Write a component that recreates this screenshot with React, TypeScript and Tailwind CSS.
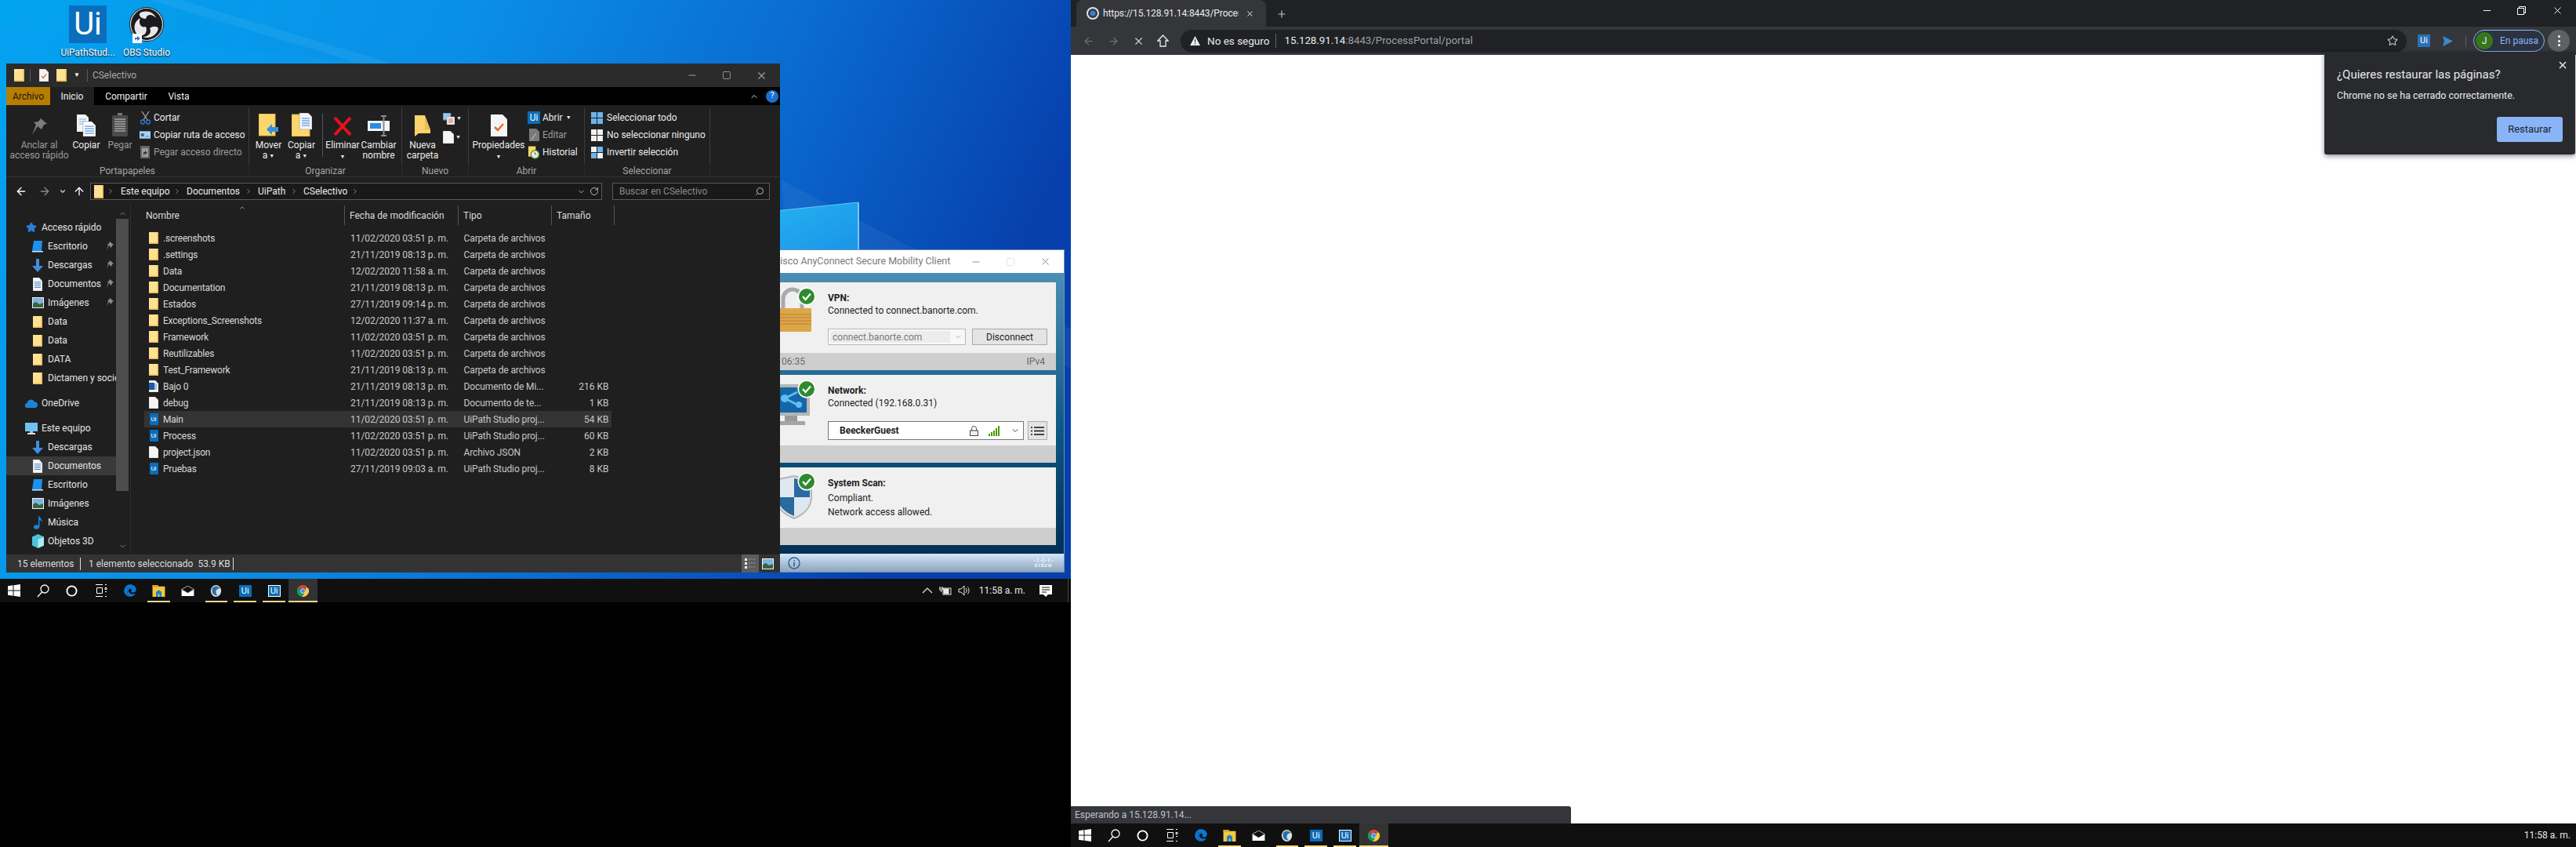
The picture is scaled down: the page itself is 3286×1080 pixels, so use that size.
import React from "react";
import { FaEdge } from "react-icons/fa";
import { ArrowLeft, ArrowRight, ArrowUp, ChevronDown, ChevronRight, ChevronUp, Minus, Plus, RotateCw, Search, Square, Star, X } from "lucide-react";

const folders = [
    [".screenshots", "11/02/2020 03:51 p. m."],
    [".settings", "21/11/2019 08:13 p. m."],
    ["Data", "12/02/2020 11:58 a. m."],
    ["Documentation", "21/11/2019 08:13 p. m."],
    ["Estados", "27/11/2019 09:14 p. m."],
    ["Exceptions_Screenshots", "12/02/2020 11:37 a. m."],
    ["Framework", "11/02/2020 03:51 p. m."],
    ["Reutilizables", "11/02/2020 03:51 p. m."],
    ["Test_Framework", "21/11/2019 08:13 p. m."],
];

const files = [
    { name: "Bajo 0", date: "21/11/2019 08:13 p. m.", type: "Documento de Mi...", size: "216 KB", icon: "word" },
    { name: "debug", date: "21/11/2019 08:13 p. m.", type: "Documento de te...", size: "1 KB", icon: "text" },
    { name: "Main", date: "11/02/2020 03:51 p. m.", type: "UiPath Studio proj...", size: "54 KB", icon: "ui", selected: true },
    { name: "Process", date: "11/02/2020 03:51 p. m.", type: "UiPath Studio proj...", size: "60 KB", icon: "ui" },
    { name: "project.json", date: "11/02/2020 03:51 p. m.", type: "Archivo JSON", size: "2 KB", icon: "blank" },
    { name: "Pruebas", date: "27/11/2019 09:03 a. m.", type: "UiPath Studio proj...", size: "8 KB", icon: "ui" },
];

function FolderIcon({ w = 12, h = 15 }: { w?: number; h?: number }) {
    return (
        <svg width={w} height={h} viewBox="0 0 12 15" preserveAspectRatio="none" className="shrink-0">
            <rect x="0" y="0" width="12" height="15" fill="#e9bd55" />
            <rect x="0" y="0" width="10.500" height="13.500" fill="#fde293" />
        </svg>
    );
}

function PageIcon({ w = 12, h = 15, lines = false, check = false }: { w?: number; h?: number; lines?: boolean; check?: boolean }) {
    return (
        <svg width={w} height={h} viewBox="0 0 12 15" preserveAspectRatio="none" className="shrink-0">
            <path d="M0 0h8l4 4v11H0z" fill="#f5f5f5" stroke="#999" strokeWidth="0.4" />
            {lines && <path d="M2 5h8M2 7h8M2 9h8M2 11h8" stroke="#4a86d0" strokeWidth="0.9" />}
            {check && <path d="M3 8.5l2.2 2.2L9 6" fill="none" stroke="#e8632b" strokeWidth="1.3" />}
        </svg>
    );
}

function UiLogo({ size = 12, height, border = false, radius = 0 }: { size?: number; height?: number; border?: boolean; radius?: number }) {
    const h = height ?? size;
    return (
        <div
            className={`flex shrink-0 items-center justify-center bg-[#0b6cb8] font-['Roboto'] leading-none text-white ${border ? "border border-white" : ""}`}
            style={{ width: size, height: h, fontSize: Math.round(Math.min(size, h) * 0.72), borderRadius: radius }}
        >
            Ui
        </div>
    );
}

function Pin() {
    return (
        <svg width="10" height="12" viewBox="0 0 10 12">
            <path d="M5 0l5 4-2 1-1 3-3-3-3 6 2-6.500L2 3l2-.5z" fill="#8a8a8a" />
        </svg>
    );
}

function DesktopIcon({ w = 14, h = 16 }: { w?: number; h?: number }) {
    return (
        <svg width={w} height={h} viewBox="0 0 14 16">
            <path d="M2 1h11l-1 13H0z" fill="#1e90ef" />
            <rect x="0" y="14" width="14" height="1.500" fill="#cfe8fb" />
        </svg>
    );
}

function DownloadIcon() {
    return (
        <svg width="14" height="17" viewBox="0 0 14 17">
            <path d="M5 0h4v9h5l-7 8-7-8h5z" fill="#3f8fdf" />
        </svg>
    );
}

function PictureIcon() {
    return (
        <svg width="15" height="14" viewBox="0 0 15 14">
            <rect width="15" height="14" fill="#f2f2f2" />
            <rect x="1" y="1" width="13" height="12" fill="#7db5dd" />
            <path d="M1 8l4-2 4 3 5-2v6H1z" fill="#38633f" />
        </svg>
    );
}

function NavItem({ label, icon, pinned, active, top }: { label: string; icon: React.ReactNode; pinned?: boolean; active?: boolean; top?: boolean }) {
    return (
        <div className={`flex h-[24px] w-[140px] items-center overflow-hidden ${active ? "bg-[#3a3a3a]" : ""}`}>
            <div className={`flex w-[16px] shrink-0 justify-center ${top ? "ml-[24px] mr-[5px]" : "ml-[32px] mr-[5px]"}`}>{icon}</div>
            <span className="whitespace-nowrap text-[#e4e4e4]">{label}</span>
            {pinned && (
                <span className="ml-auto mr-[3px] shrink-0">
                    <Pin />
                </span>
            )}
        </div>
    );
}

function BigButton({ width, icon, lines, disabled, caret, className = "" }: { width: number; icon: React.ReactNode; lines: string[]; disabled?: boolean; caret?: boolean; className?: string }) {
    return (
        <div className={`flex shrink-0 flex-col items-center ${className}`} style={{ width }}>
            <div className="flex h-[42px] items-end justify-center pb-[5px]">{icon}</div>
            {lines.map((l, i) => (
                <div key={i} className={`h-[13px] whitespace-nowrap leading-[13px] ${disabled ? "text-[#9c9c9c]" : "text-[#ececec]"}`}>
                    {l}
                    {caret && i === lines.length - 1 && l !== "" && <span className="ml-[2px] text-[7px] align-[1px]">▼</span>}
                    {caret && l === "" && <span className="text-[7px]">▼</span>}
                </div>
            ))}
        </div>
    );
}

function SmallRow({ icon, label, disabled, caret }: { icon: React.ReactNode; label: string; disabled?: boolean; caret?: boolean }) {
    return (
        <div className="flex h-[22px] items-center gap-[4px] whitespace-nowrap">
            <div className="flex w-[14px] shrink-0 justify-center">{icon}</div>
            <span className={disabled ? "text-[#9c9c9c]" : "text-[#ececec]"}>{label}</span>
            {caret && <span className="text-[7px] text-[#ececec]">▼</span>}
        </div>
    );
}

function RibbonGroup({ width, label, children }: { width: number; label: string; children: React.ReactNode }) {
    return (
        <div className="flex h-[89px] shrink-0 flex-col" style={{ width }}>
            <div className="flex h-[72px] border-r border-[#3c3c3c]">{children}</div>
            <div className="flex h-[17px] items-center justify-center border-r border-[#2a2a2a] text-[#a5a5a5]">{label}</div>
        </div>
    );
}

function GridIcon({ kind }: { kind: "all" | "none" | "invert" }) {
    const on = "#6db4ee";
    const off = "#f2f2f2";
    const colors = kind === "all" ? [on, on, on, on] : kind === "none" ? [off, off, off, off] : [off, on, on, off];
    return (
        <svg width="15" height="15" viewBox="0 0 15 15">
            <rect x="0" y="0" width="7" height="7" fill={colors[0]} />
            <rect x="8" y="0" width="7" height="7" fill={colors[1]} />
            <rect x="0" y="8" width="7" height="7" fill={colors[2]} />
            <rect x="8" y="8" width="7" height="7" fill={colors[3]} />
        </svg>
    );
}

function Ribbon() {
    return (
        <div className="flex h-[92px] border-b border-[#333] bg-[#202020] pt-[3px]">
            <RibbonGroup width={310} label="Portapapeles">
                <BigButton
                    width={84}
                    disabled
                    lines={["Anclar al", "acceso rápido"]}
                    icon={
                        <svg width="22" height="24" viewBox="0 0 22 24">
                            <path d="M13 1l8 7-4 1-3 6-5-4-7 11 5-13-3-3 6-1z" fill="#7c7c7c" />
                        </svg>
                    }
                />
                <BigButton
                    width={36}
                    lines={["Copiar"]}
                    icon={
                        <svg width="24" height="28" viewBox="0 0 24 28">
                            <path d="M0 0h11l4 4v18H0z" fill="#f3f3f3" />
                            <path d="M3 6h9M3 9h9M3 12h9" stroke="#7fb2e6" />
                            <path d="M8 9h11l5 5v14H8z" fill="#fff" stroke="#888" strokeWidth=".5" />
                            <path d="M10 15h12M10 18h12M10 21h12M10 24h12" stroke="#2f7fe0" />
                        </svg>
                    }
                />
                <BigButton
                    width={50}
                    disabled
                    lines={["Pegar"]}
                    icon={
                        <svg width="20" height="30" viewBox="0 0 20 30">
                            <rect x="7" y="0" width="6" height="4" fill="#777" />
                            <rect x="0" y="3" width="20" height="27" rx="2" fill="#4b4b4b" />
                            <path d="M3 8h14M3 11h14M3 14h14M3 17h14M3 20h14M3 23h14" stroke="#8d8d8d" strokeWidth="2" />
                        </svg>
                    }
                />
                <div className="mt-[2px] flex flex-col">
                    <SmallRow
                        label="Cortar"
                        icon={
                            <svg width="13" height="17" viewBox="0 0 13 17">
                                <path d="M2 0l7 11M11 0L4 11" stroke="#aaa" strokeWidth="1.200" />
                                <circle cx="3" cy="13.500" r="2.500" fill="none" stroke="#2c7fd6" strokeWidth="1.300" />
                                <circle cx="10" cy="13.500" r="2.500" fill="none" stroke="#2c7fd6" strokeWidth="1.300" />
                            </svg>
                        }
                    />
                    <SmallRow
                        label="Copiar ruta de acceso"
                        icon={
                            <svg width="15" height="10" viewBox="0 0 15 10">
                                <rect width="15" height="10" fill="#a8d4f5" />
                                <path d="M2 3l1 4 1-4 1 4 1-4M8 7h1M10 7h1M12 7h1" stroke="#1c3f66" fill="none" />
                            </svg>
                        }
                    />
                    <SmallRow
                        label="Pegar acceso directo"
                        disabled
                        icon={
                            <svg width="12" height="16" viewBox="0 0 12 16">
                                <rect width="12" height="16" rx="1" fill="#666" />
                                <rect x="2" y="3" width="8" height="11" fill="#9a9a9a" />
                                <path d="M4 12V8h2V6l3 3-3 2V9.500z" fill="#333" />
                            </svg>
                        }
                    />
                </div>
            </RibbonGroup>
            <RibbonGroup width={195} label="Organizar">
                <BigButton
                    width={41}
                    className="ml-[4px]"
                    lines={["Mover", "a"]}
                    caret
                    icon={
                        <svg width="26" height="29" viewBox="0 0 26 29">
                            <rect width="21" height="28" fill="#fbd66c" stroke="#e0b040" />
                            <path d="M10 20l7-7v4h8v6h-8v4z" fill="#3b8ede" />
                        </svg>
                    }
                />
                <BigButton
                    width={43}
                    lines={["Copiar", "a"]}
                    caret
                    icon={
                        <svg width="26" height="30" viewBox="0 0 26 30">
                            <rect y="2" width="23" height="28" fill="#fbd66c" stroke="#e0b040" />
                            <path d="M10 0h11l5 5v16H10z" fill="#f5f5f5" stroke="#888" strokeWidth=".5" />
                            <path d="M13 7h10M13 10h10M13 13h10M13 16h10" stroke="#2f7fe0" />
                        </svg>
                    }
                />
                <div className="ml-[5px] mt-[8px] h-[55px] w-px shrink-0 bg-[#555]" />
                <BigButton
                    width={50}
                    lines={["Eliminar", ""]}
                    caret
                    icon={
                        <svg width="26" height="26" viewBox="0 0 26 26">
                            <path d="M3 2l20 22M23 2L3 24" stroke="#e8101c" strokeWidth="4" />
                        </svg>
                    }
                />
                <BigButton
                    width={42}
                    lines={["Cambiar", "nombre"]}
                    icon={
                        <svg width="28" height="27" viewBox="0 0 28 27">
                            <rect y="7" width="28" height="13" fill="#f4f4f4" />
                            <rect x="3" y="10" width="14" height="7" fill="#2f8be0" />
                            <path d="M17 1h7M17 26h7M20.500 1v25" stroke="#8a8a8a" strokeWidth="2" />
                        </svg>
                    }
                />
            </RibbonGroup>
            <RibbonGroup width={85} label="Nuevo">
                <BigButton
                    width={52}
                    lines={["Nueva", "carpeta"]}
                    icon={
                        <svg width="20" height="28" viewBox="0 0 20 28">
                            <path d="M0 1h13v18h7v5H5l-5 4z" fill="#fbd26a" />
                            <path d="M13 1l7 18h-7z" fill="#e8bc55" />
                        </svg>
                    }
                />
                <div className="flex flex-col gap-[2px] pt-[3px]">
                    <div className="flex h-[22px] items-center gap-[2px]">
                        <svg width="15" height="15" viewBox="0 0 15 15">
                            <rect width="10" height="9" fill="#9cc6ea" stroke="#4a7ca8" />
                            <rect x="5" y="5" width="10" height="10" fill="#f0f0f0" stroke="#888" strokeWidth=".5" />
                            <path d="M7 8h6M7 10h6M7 12h6" stroke="#d06a60" />
                        </svg>
                        <span className="text-[7px] text-[#ececec]">▼</span>
                    </div>
                    <div className="flex h-[22px] items-center gap-[2px]">
                        <PageIcon w={14} h={16} />
                        <span className="text-[7px] text-[#ececec]">▼</span>
                    </div>
                </div>
            </RibbonGroup>
            <RibbonGroup width={148} label="Abrir">
                <BigButton
                    width={76}
                    lines={["Propiedades", ""]}
                    caret
                    icon={
                        <svg width="21" height="28" viewBox="0 0 21 28">
                            <path d="M0 0h15l6 6v22H0z" fill="#f4f4f4" />
                            <path d="M5 16l4 4 7-8" fill="none" stroke="#ea6a2e" strokeWidth="2.500" />
                        </svg>
                    }
                />
                <div className="mt-[2px] flex flex-col">
                    <SmallRow label="Abrir" caret icon={<UiLogo size={16} height={16} />} />
                    <SmallRow
                        label="Editar"
                        disabled
                        icon={
                            <svg width="13" height="16" viewBox="0 0 13 16">
                                <path d="M0 0h9l4 4v12H0z" fill="#7a7a7a" />
                                <path d="M3 14l6-8" stroke="#ccc" />
                            </svg>
                        }
                    />
                    <SmallRow
                        label="Historial"
                        icon={
                            <svg width="15" height="17" viewBox="0 0 15 17">
                                <rect width="10" height="14" fill="#fbd66c" />
                                <circle cx="9" cy="11" r="5.500" fill="#e8e8e8" stroke="#5d9c3a" strokeWidth="1.500" />
                                <path d="M9 8v3h2" stroke="#555" fill="none" />
                            </svg>
                        }
                    />
                </div>
            </RibbonGroup>
            <RibbonGroup width={160} label="Seleccionar">
                <div className="ml-[8px] mt-[2px] flex flex-col">
                    <div className="flex h-[22px] items-center gap-[5px] whitespace-nowrap">
                        <GridIcon kind="all" />
                        <span className="text-[#ececec]">Seleccionar todo</span>
                    </div>
                    <div className="flex h-[22px] items-center gap-[5px] whitespace-nowrap">
                        <GridIcon kind="none" />
                        <span className="text-[#ececec]">No seleccionar ninguno</span>
                    </div>
                    <div className="flex h-[22px] items-center gap-[5px] whitespace-nowrap">
                        <GridIcon kind="invert" />
                        <span className="text-[#ececec]">Invertir selección</span>
                    </div>
                </div>
            </RibbonGroup>
        </div>
    );
}

function FileRow({ name, date, type, size, icon, selected }: { name: string; date: string; type: string; size?: string; icon: React.ReactNode; selected?: boolean }) {
    return (
        <div className={`ml-[17px] flex h-[21px] w-[596px] items-center text-[#d8d8d8] ${selected ? "bg-[#333333]" : ""}`}>
            <div className="ml-[6px] flex w-[12px] shrink-0 justify-center">{icon}</div>
            <span className="ml-[6px] w-[239px] shrink-0 whitespace-nowrap tracking-[-0.2px]">{name}</span>
            <span className="w-[144.500px] shrink-0 whitespace-nowrap tracking-[-0.05px] text-[#c8c8c8]">{date}</span>
            <span className="w-[105px] shrink-0 whitespace-nowrap tracking-[-0.1px] text-[#c8c8c8]">{type}</span>
            <span className="w-[80px] shrink-0 whitespace-nowrap text-right text-[#c8c8c8]">{size}</span>
        </div>
    );
}

function fileIcon(kind: string) {
    if (kind === "ui") return <UiLogo size={11} height={15} radius={1} />;
    if (kind === "word")
        return (
            <div className="relative">
                <PageIcon w={12} h={15} lines />
                <span className="absolute left-0 top-[3px] h-[9px] w-[7px] bg-[#1c5aa8]" />
            </div>
        );
    if (kind === "text") return <PageIcon lines={false} />;
    return <PageIcon />;
}

function Explorer() {
    return (
        <div className="absolute left-[8px] top-[81px] z-10 flex h-[649px] w-[987px] flex-col bg-[#1f1f1f] font-['Roboto'] text-[12px]">
            <div className="flex h-[30px] shrink-0 items-center bg-[#2b2b2b]">
                <div className="ml-[10px]">
                    <FolderIcon w={13} h={16} />
                </div>
                <div className="ml-[7px] h-[16px] w-px bg-[#5a5a5a]" />
                <div className="ml-[11px]">
                    <PageIcon w={12} h={16} check />
                </div>
                <div className="ml-[10px]">
                    <FolderIcon w={13} h={16} />
                </div>
                <span className="ml-[9px] text-[8px] text-white">▼</span>
                <div className="ml-[9px] h-[16px] w-px bg-[#5a5a5a]" />
                <span className="ml-[6px] text-[#a6a6a6]">CSelectivo</span>
                <div className="ml-auto flex items-center text-[#a0a0a0]">
                    <Minus size={14} strokeWidth={1.700} />
                    <Square size={12} strokeWidth={1.700} className="ml-[31px]" />
                    <X size={15} strokeWidth={1.700} className="ml-[31px] mr-[16px]" />
                </div>
            </div>
            <div className="flex h-[23px] shrink-0 items-center bg-black text-[#f0f0f0]">
                <div className="flex h-full w-[56px] items-center justify-center bg-[#b67d00] text-[#1a1a1a]">Archivo</div>
                <div className="flex h-full w-[56px] items-center justify-center bg-[#202020]">Inicio</div>
                <div className="flex w-[82px] justify-center">Compartir</div>
                <div className="flex w-[52px] justify-center">Vista</div>
                <ChevronUp size={12} className="ml-auto text-[#ddd]" />
                <div className="ml-[9px] mr-[2px] flex h-[16px] w-[16px] items-center justify-center rounded-full bg-[#1c6fd0] text-[11px] text-white">?</div>
            </div>
            <Ribbon />
            <div className="flex h-[34px] shrink-0 items-center pt-[2px]">
                <ArrowLeft size={16} className="ml-[11px] text-white" />
                <ArrowRight size={16} className="ml-[14px] text-[#8a8a8a]" />
                <ChevronDown size={10} strokeWidth={3} className="ml-[10px] text-[#ccc]" />
                <ArrowUp size={16} className="ml-[8px] text-white" />
                <div className="ml-[6px] flex h-[22px] w-[653px] items-center border border-[#5a5a5a] bg-[#191919] text-[#ececec]">
                    <div className="ml-[4px]">
                        <FolderIcon w={12} h={17} />
                    </div>
                    <ChevronRight size={10} className="ml-[4px] text-[#9a9a9a]" />
                    <span className="ml-[8px] w-[67px] whitespace-nowrap">Este equipo</span>
                    <ChevronRight size={10} className="text-[#9a9a9a]" />
                    <span className="ml-[7px] w-[74px] whitespace-nowrap">Documentos</span>
                    <ChevronRight size={10} className="text-[#9a9a9a]" />
                    <span className="ml-[7px] w-[41px] whitespace-nowrap">UiPath</span>
                    <ChevronRight size={10} className="text-[#9a9a9a]" />
                    <span className="ml-[7px] w-[61px] whitespace-nowrap">CSelectivo</span>
                    <ChevronRight size={10} className="text-[#9a9a9a]" />
                    <ChevronDown size={11} className="ml-auto text-[#bbb]" />
                    <RotateCw size={12} className="ml-[5px] mr-[3px] text-[#bbb]" />
                </div>
                <div className="ml-[13px] flex h-[22px] w-[201px] items-center border border-[#5a5a5a] bg-[#191919] pl-[8px] text-[#8a8a8a]">
                    Buscar en CSelectivo
                    <Search size={12} className="ml-auto mr-[6px] -scale-x-100 text-[#bbb]" />
                </div>
            </div>
            <div className="flex min-h-0 flex-1">
                <div className="flex w-[140px] shrink-0 flex-col overflow-hidden pt-[18px]">
                    <NavItem top label="Acceso rápido" icon={<Star size={14} fill="#2a7fdc" stroke="#2a7fdc" />} />
                    <NavItem pinned label="Escritorio" icon={<DesktopIcon />} />
                    <NavItem pinned label="Descargas" icon={<DownloadIcon />} />
                    <NavItem pinned label="Documentos" icon={<PageIcon w={12} h={17} lines />} />
                    <NavItem pinned label="Imágenes" icon={<PictureIcon />} />
                    <NavItem label="Data" icon={<FolderIcon />} />
                    <NavItem label="Data" icon={<FolderIcon />} />
                    <NavItem label="DATA" icon={<FolderIcon />} />
                    <NavItem label="Dictamen y sociedad" icon={<FolderIcon />} />
                    <div className="h-[8px] shrink-0" />
                    <NavItem
                        top
                        label="OneDrive"
                        icon={
                            <svg width="16" height="12" viewBox="0 0 16 12">
                                <path d="M3 12a3 3 0 0 1-.500-6A5 5 0 0 1 12 4.500 3.800 3.800 0 0 1 13 12z" fill="#1d83d8" />
                            </svg>
                        }
                    />
                    <div className="h-[8px] shrink-0" />
                    <NavItem
                        top
                        label="Este equipo"
                        icon={
                            <svg width="16" height="15" viewBox="0 0 16 15">
                                <rect width="16" height="11" fill="#6fc2f2" />
                                <rect x="6" y="11" width="4" height="2" fill="#bbb" />
                                <rect x="3" y="13" width="10" height="2" fill="#ddd" />
                            </svg>
                        }
                    />
                    <NavItem label="Descargas" icon={<DownloadIcon />} />
                    <NavItem active label="Documentos" icon={<PageIcon w={12} h={17} lines />} />
                    <NavItem label="Escritorio" icon={<DesktopIcon />} />
                    <NavItem label="Imágenes" icon={<PictureIcon />} />
                    <NavItem
                        label="Música"
                        icon={
                            <svg width="11" height="18" viewBox="0 0 11 18">
                                <ellipse cx="3.500" cy="15" rx="3.500" ry="2.800" fill="#1c86d8" />
                                <path d="M6 15V0c1 3 5 4 5 9-1-2-3-3-3.500-3V15z" fill="#1c86d8" />
                            </svg>
                        }
                    />
                    <NavItem
                        label="Objetos 3D"
                        icon={
                            <svg width="15" height="18" viewBox="0 0 15 18">
                                <path d="M7.500 0L15 3.500v11L7.500 18 0 14.500v-11z" fill="#4bc4d8" />
                                <path d="M7.500 7L15 3.500v11L7.500 18z" fill="#a8ecf2" />
                            </svg>
                        }
                    />
                </div>
                <div className="flex w-[16px] shrink-0 flex-col items-center text-[#8a8a8a]">
                    <ChevronUp size={11} className="mt-[7px]" />
                    <div className="mt-[1px] h-[347px] w-full bg-[#4d4d4d]" />
                    <ChevronDown size={11} className="mt-auto mb-[5px]" />
                </div>
                <div className="ml-[2px] flex-1 border-l border-[#2e2e2e]">
                    <div className="relative mt-[2px] flex h-[25px] text-[#dcdcdc]">
                        <ChevronUp size={10} className="absolute left-[137px] top-[-2px] text-[#aaa]" />
                        <div className="flex w-[273px] items-center border-r border-[#555] pl-[19px]">Nombre</div>
                        <div className="flex w-[145px] items-center border-r border-[#555] pl-[6px]">Fecha de modificación</div>
                        <div className="flex w-[119px] items-center border-r border-[#555] pl-[6px]">Tipo</div>
                        <div className="flex w-[80px] items-center border-r border-[#555] pl-[6px]">Tamaño</div>
                    </div>
                    <div className="pt-[6px]">
                        {folders.map(([name, date]) => (
                            <FileRow key={name} name={name} date={date} type="Carpeta de archivos" icon={<FolderIcon />} />
                        ))}
                        {files.map((f) => (
                            <FileRow key={f.name} name={f.name} date={f.date} type={f.type} size={f.size} selected={f.selected} icon={fileIcon(f.icon)} />
                        ))}
                    </div>
                </div>
            </div>
            <div className="flex h-[23px] shrink-0 items-center bg-[#333333] text-[#dcdcdc]">
                <span className="ml-[14px] w-[80px]">15 elementos</span>
                <span className="h-[16px] w-px bg-[#ddd]" />
                <span className="ml-[10px] w-[184px] whitespace-pre">1 elemento seleccionado  53.9 KB</span>
                <span className="h-[16px] w-px bg-[#ddd]" />
                <div className="ml-auto flex h-full w-[22px] items-center justify-center bg-[#5c5c5c]">
                    <svg width="14" height="16" viewBox="0 0 14 16">
                        <path d="M0 1h3v3H0zM0 6h3v3H0zM0 11h3v3H0z" fill="#f2f2f2" />
                        <path d="M5 2h9M5 7h9M5 12h9" stroke="#999" strokeDasharray="2 1" />
                    </svg>
                </div>
                <div className="ml-[4px] mr-[8px]">
                    <PictureIcon />
                </div>
            </div>
        </div>
    );
}

function CheckBadge() {
    return (
        <svg width="24" height="24" viewBox="0 0 24 24" className="absolute left-[46px] top-[6px]">
            <circle cx="12" cy="12" r="11.500" fill="#fff" />
            <circle cx="12" cy="12" r="10" fill="#2f8a2f" />
            <path d="M7 12l3.500 4L17 8.500" fill="none" stroke="#fff" strokeWidth="2.200" />
        </svg>
    );
}

function AnyPanel({ icon, strip, className, children }: { icon: React.ReactNode; strip?: React.ReactNode; className: string; children: React.ReactNode }) {
    return (
        <div className={`flex ml-[12px] w-[376px] flex-col bg-[#f0f0f0] ${className}`}>
            <div className="relative flex min-h-0 flex-1">
                <div className="relative w-[85px] shrink-0">
                    {icon}
                    <CheckBadge />
                </div>
                <div className="flex-1 pr-[11px] text-[12px] text-[#1e1e1e]">{children}</div>
            </div>
            <div className="flex h-[22px] shrink-0 items-center justify-between bg-[#cecece] pl-[26px] pr-[14px] text-[#6a6a6a]">{strip}</div>
        </div>
    );
}

function AnyConnect() {
    return (
        <div className="absolute left-[958px] top-[318px] flex h-[412px] w-[400px] flex-col border border-[#6d93b8] font-['Roboto'] text-[12px]">
            <div className="flex h-[29px] shrink-0 items-center bg-white pl-[28px] text-[#7a7a7a]">
                <span className="text-[12.500px]">Cisco AnyConnect Secure Mobility Client</span>
                <div className="ml-auto flex items-center text-[#888]">
                    <Minus size={14} strokeWidth={1.500} />
                    <Square size={12} strokeWidth={1.500} className="ml-[31px] text-[#ddd]" />
                    <X size={15} strokeWidth={1.500} className="ml-[31px] mr-[16px]" />
                </div>
            </div>
            <div className="flex flex-1 flex-col bg-gradient-to-b from-[#4b8fb4] via-[#0d5a86] to-[#03294f] pt-[12px]">
                <AnyPanel
                    className="h-[112px]"
                    strip={
                        <>
                            <span>06:35</span>
                            <span>IPv4</span>
                        </>
                    }
                    icon={
                        <svg width="70" height="70" viewBox="0 0 70 70" className="absolute left-0 top-[5px]">
                            <path d="M28 30V16a12 12 0 0 1 24 0v14" fill="none" stroke="#a9a9a9" strokeWidth="5" />
                            <rect x="2" y="28" width="62" height="30" fill="#dca64a" />
                            <path d="M2 36h62M2 40h62M2 44h62M2 48h62" stroke="#b9812a" />
                        </svg>
                    }
                >
                    <div className="pt-[12px] font-bold leading-[16px]">VPN:</div>
                    <div className="leading-[16px]">Connected to connect.banorte.com.</div>
                    <div className="mt-[15px] flex h-[21px] gap-[8px]">
                        <div className="flex w-[176px] items-center border border-[#b8b8b8] bg-[#f8f8f8] p-[2px]">
                            <div className="flex h-full w-[153px] items-center bg-[#ececec] pl-[3px] text-[#7a7a7a]">connect.banorte.com</div>
                            <ChevronDown size={11} className="ml-[5px] text-[#aaa]" />
                        </div>
                        <div className="flex w-[96px] items-center justify-center border border-[#aaa] bg-[#e4e4e4]">Disconnect</div>
                    </div>
                </AnyPanel>
                <AnyPanel
                    className="mt-[6px] h-[112px]"
                    icon={
                        <svg width="70" height="70" viewBox="0 0 70 70" className="absolute left-0 top-0">
                            <rect x="-5" y="14" width="65" height="36" fill="#1666a8" stroke="#b5b5b5" strokeWidth="4" />
                            <rect x="30" y="52" width="16" height="8" fill="#999" />
                            <rect x="22" y="59" width="34" height="5" fill="#a5a5a5" />
                            <path d="M30 30l16-8M30 30l16 8" stroke="#5cc0ee" strokeWidth="3" />
                            <circle cx="30" cy="30" r="5" fill="#5cc0ee" />
                            <circle cx="48" cy="38" r="4" fill="#5cc0ee" />
                        </svg>
                    }
                >
                    <div className="pt-[12px] font-bold leading-[16px]">Network:</div>
                    <div className="leading-[16px]">Connected (192.168.0.31)</div>
                    <div className="mt-[15px] flex h-[24px] gap-[5px]">
                        <div className="flex w-[250px] items-center border border-[#777] bg-white pl-[14px] font-bold">
                            BeeckerGuest
                            <svg width="11" height="13" viewBox="0 0 11 13" className="ml-auto">
                                <path d="M2.500 6V3.500a3 3 0 0 1 6 0V6" fill="none" stroke="#444" />
                                <rect x=".5" y="6" width="10" height="6.500" fill="#eee" stroke="#444" />
                            </svg>
                            <svg width="16" height="13" viewBox="0 0 16 13" className="ml-[13px]">
                                <path d="M1 13v-3M4 13V8M7 13V6M10 13V3M13 13V0" stroke="#4e9a06" strokeWidth="2" />
                            </svg>
                            <ChevronDown size={12} className="ml-[12px] mr-[4px] text-[#444]" />
                        </div>
                        <div className="flex w-[25px] items-center justify-center border border-[#aaa] bg-[#e4e4e4]">
                            <svg width="17" height="11" viewBox="0 0 17 11">
                                <path d="M0 1h2M4 1h13M0 5.500h2M4 5.500h13M0 10h2M4 10h13" stroke="#111" strokeWidth="1.500" />
                            </svg>
                        </div>
                    </div>
                </AnyPanel>
                <AnyPanel
                    className="mt-[6px] h-[99px]"
                    icon={
                        <svg width="66" height="56" viewBox="0 0 66 56" className="absolute left-0 top-[10px]">
                            <path d="M18 6L42 1l22 5v22c0 13-10 22-22 27C30 50 18 41 18 28z" fill="#dfe8f0" stroke="#b5b5b5" strokeWidth="2" />
                            <path d="M42 4v24h20V8zM42 28v24C30 47 21 39 20 28z" fill="#2b6aa0" />
                        </svg>
                    }
                >
                    <div className="pt-[12px] font-bold leading-[16px]">System Scan:</div>
                    <div className="mt-[2px] leading-[18px]">Compliant.</div>
                    <div className="leading-[18px]">Network access allowed.</div>
                </AnyPanel>
                <div className="mt-auto flex h-[23px] shrink-0 items-center bg-gradient-to-b from-[#d3e6fa] to-[#8da4bc]">
                    <svg width="16" height="16" viewBox="0 0 16 16" className="ml-[46px]">
                        <circle cx="8" cy="8" r="7" fill="none" stroke="#2d5f8f" strokeWidth="1.400" />
                        <path d="M8 7v5M8 4v1.500" stroke="#2d5f8f" strokeWidth="1.600" />
                    </svg>
                    <div className="ml-auto mr-[14px] flex flex-col items-center leading-none text-white">
                        <svg width="24" height="7" viewBox="0 0 24 7">
                            <path d="M1 3v2M5 1v5M9 3v2M12 0v7M15 3v2M19 1v5M23 3v2" stroke="#fff" />
                        </svg>
                        <span className="text-[6px] font-bold tracking-[1px]">CISCO</span>
                    </div>
                </div>
            </div>
        </div>
    );
}

function ChromeIcon({ size = 15 }: { size?: number }) {
    return (
        <svg width={size} height={size} viewBox="0 0 18 18">
            <path d="M9 0a9 9 0 0 1 7.800 4.500H9a4.500 4.500 0 0 0-4.200 3L2 2.900A9 9 0 0 1 9 0z" fill="#db4437" />
            <path d="M2 2.900L6 10a4 4 0 0 0 4 3l-2.500 4.900A9 9 0 0 1 2 2.900z" fill="#0f9d58" />
            <path d="M16.800 4.500A9 9 0 0 1 7.500 17.900L12 10.500a4 4 0 0 0 0-6z" fill="#ffcd40" />
            <circle cx="9" cy="9" r="3.500" fill="#4285f4" stroke="#fff" strokeWidth="1" />
        </svg>
    );
}

function TaskSlot({ children, running, active }: { children: React.ReactNode; running?: boolean; active?: boolean }) {
    return (
        <div className={`relative flex h-full w-[36.800px] shrink-0 items-center justify-center ${active ? "bg-[#333333]" : ""}`}>
            {children}
            {running && <span className={`absolute bottom-0 h-[2px] bg-[#f5d98a] ${active ? "inset-x-0" : "inset-x-[4px]"}`} />}
        </div>
    );
}

function TaskIcons() {
    return (
        <>
            <TaskSlot>
                <svg width="16" height="16" viewBox="0 0 16 16">
                    <path d="M0 2.200l6.500-.9v6.200H0zM7.500 1.200L16 0v7.500H7.500zM0 8.500h6.500v6.200L0 13.800zM7.500 8.500H16V16l-8.500-1.200z" fill="#fff" />
                </svg>
            </TaskSlot>
            <TaskSlot>
                <svg width="16" height="17" viewBox="0 0 16 17" fill="none" stroke="#fff" strokeWidth="1.300">
                    <circle cx="10" cy="6" r="5" />
                    <path d="M6.500 10L1 16" />
                </svg>
            </TaskSlot>
            <TaskSlot>
                <svg width="15" height="15" viewBox="0 0 16 16">
                    <circle cx="8" cy="8" r="6.500" fill="none" stroke="#fff" strokeWidth="2" />
                </svg>
            </TaskSlot>
            <TaskSlot>
                <svg width="16" height="16" viewBox="0 0 16 16" fill="none" stroke="#fff">
                    <path d="M1 .5h9M2.500 4.500h7v7h-7zM1 15.500h9M13 .5h2M13 4.500h2v2h-2zM13 9.500h2M13 15.500h2" />
                </svg>
            </TaskSlot>
            <TaskSlot>
                <FaEdge size={16} className="text-[#0a78d7]" />
            </TaskSlot>
            <TaskSlot running>
                <svg width="17" height="15" viewBox="0 0 18 17">
                    <path d="M0 0h7l2 2h9v15H0z" fill="#f3c83f" />
                    <rect x="0" y="0" width="8" height="3" fill="#d8a52a" />
                    <path d="M5 17v-7l4-3 4 3v7h-3v-4H8v4z" fill="#1f7fd0" />
                </svg>
            </TaskSlot>
            <TaskSlot>
                <svg width="17" height="13" viewBox="0 0 17 14">
                    <path d="M0 5L8.500 0 17 5v9H0z" fill="#fff" />
                    <path d="M0 5l8.500 5L17 5 8.500 0z" fill="#111" stroke="#fff" strokeWidth=".6" />
                </svg>
            </TaskSlot>
            <TaskSlot running>
                <svg width="15" height="15" viewBox="0 0 16 18">
                    <ellipse cx="8" cy="9" rx="8" ry="9" fill="#d8dfe6" />
                    <path d="M3 4c4-3 9-2 11 1-3 0-6 2-6 5s1 5 3 6c-5 1-9-3-9-7 0-2 0-4 1-5z" fill="#2a6ea8" />
                    <path d="M5 2c3-1 6-1 8 2-3-1-6 0-8-2z" fill="#49a84a" />
                </svg>
            </TaskSlot>
            <TaskSlot running>
                <UiLogo size={16} height={15} />
            </TaskSlot>
            <TaskSlot running>
                <UiLogo size={16} height={15} border />
            </TaskSlot>
            <TaskSlot running active>
                <ChromeIcon />
            </TaskSlot>
        </>
    );
}

function Wallpaper() {
    return (
        <svg className="absolute inset-0" width="1366" height="738" viewBox="0 0 1366 738">
            <defs>
                <linearGradient id="wp" x1="0" y1="0" x2="1" y2="0.25">
                    <stop offset="0" stopColor="#02a4f0" />
                    <stop offset="0.42" stopColor="#0a8fe6" />
                    <stop offset="0.72" stopColor="#0a6bd0" />
                    <stop offset="1" stopColor="#0740ad" />
                </linearGradient>
                <linearGradient id="pane" x1="0" y1="0" x2="1" y2="1">
                    <stop offset="0" stopColor="#27b4f2" />
                    <stop offset="1" stopColor="#1892e6" />
                </linearGradient>
            </defs>
            <rect width="1366" height="738" fill="url(#wp)" />
            <path d="M190 0h40L500 81h-40z" fill="#ffffff" opacity="0.06" />
            <path d="M0 30L480 81H0z" fill="#0c9ff0" opacity="0.35" />
            <path d="M997 230L1366 420V470L1000 272z" fill="#ffffff" opacity="0.05" />
            <path d="M960 272L1095 258V330H960z" fill="url(#pane)" />
            <path d="M1095 258V330" stroke="#9fdcff" strokeWidth="1.500" />
            <path d="M960 272L1095 258" stroke="#66c6f5" strokeWidth="1" />
        </svg>
    );
}

function LeftMonitor() {
    return (
        <div className="flex h-[768px] w-[1366px] shrink-0 flex-col">
            <div className="relative h-[738px] overflow-hidden">
                <Wallpaper />
                <div className="absolute left-[73px] top-[7px] flex w-[78px] flex-col items-center font-['Roboto'] text-[12px] text-white [text-shadow:0_1px_2px_#000]">
                    <div className="flex h-[48px] w-[48px] items-center justify-center bg-[#0a6ebd] text-[40px] leading-none [text-shadow:none]">Ui</div>
                    <span className="mt-[3px] whitespace-nowrap">UiPathStud...</span>
                </div>
                <div className="absolute left-[148px] top-[7px] flex w-[78px] flex-col items-center font-['Roboto'] text-[12px] text-white [text-shadow:0_1px_2px_#000]">
                    <svg width="48" height="48" viewBox="0 0 48 48">
                        <circle cx="24" cy="24" r="22" fill="#1b1a1e" />
                        <circle cx="24" cy="24" r="20.500" fill="none" stroke="#d8d8d8" strokeWidth="1.200" />
                        <path d="M15 10c8-5 18-2 21 6-5-6-12-5-13 1-5 0-9-3-8-7zM12 37c-6-7-4-17 4-21-3 7 1 13 7 11 2 5 0 10-4 11zM39 29c-2 10-12 14-20 11 8 0 12-6 9-11 4-3 9-3 11 0z" fill="#e8e8e8" />
                        <rect x="6" y="36" width="12" height="12" fill="#fff" />
                        <path d="M9 45v-4h3v-2l4 3-4 3v-2h-2z" fill="#2a70c8" />
                    </svg>
                    <span className="mt-[3px] whitespace-nowrap">OBS Studio</span>
                </div>
                <AnyConnect />
                <Explorer />
            </div>
            <div className="flex h-[30px] shrink-0 items-center bg-[#101010] font-['Roboto'] text-[12px] text-[#e8e8e8]">
                <TaskIcons />
                <svg width="14" height="8" viewBox="0 0 14 8" fill="none" stroke="#e8e8e8" className="ml-[771px]">
                    <path d="M1 7l6-6 6 6" strokeWidth="1.200" />
                </svg>
                <svg width="16" height="12" viewBox="0 0 16 12" className="ml-[8px]" fill="none" stroke="#e8e8e8">
                    <path d="M1 1v2M4 1v2M0 3h5v2H0zM2.500 5v3" />
                    <rect x="5" y="3" width="10" height="8" />
                    <rect x="6" y="4" width="6" height="6" fill="#e8e8e8" />
                </svg>
                <svg width="16" height="14" viewBox="0 0 16 14" className="ml-[8px]" fill="none" stroke="#e8e8e8">
                    <path d="M1 5h3l4-4v12l-4-4H1zM10 4c1.500 2 1.500 4 0 6M12.500 2.500c2 3 2 6 0 9" />
                </svg>
                <span className="ml-[11px] whitespace-nowrap">11:58 a. m.</span>
                <svg width="16" height="15" viewBox="0 0 16 15" className="ml-[18px]">
                    <path d="M0 0h16v12h-5l-3 3-3-3H0z" fill="#fff" />
                    <path d="M3 3h10M3 6h10M3 9h6" stroke="#111" />
                </svg>
                <span className="ml-[20px] h-[30px] w-px bg-[#444]" />
            </div>
        </div>
    );
}

function RightMonitor() {
    return (
        <div className="flex h-[1080px] w-[1920px] shrink-0 flex-col font-['Roboto'] text-[12px]">
            <div className="flex h-[34px] shrink-0 items-end bg-[#202124]">
                <div className="ml-[7px] flex h-[34px] w-[242px] items-center rounded-t-[8px] bg-[#35363a] text-[#e8eaed]">
                    <svg width="16" height="16" viewBox="0 0 16 16" className="ml-[13px]">
                        <circle cx="8" cy="8" r="7" fill="none" stroke="#d8e4f2" strokeWidth="2" />
                        <circle cx="8" cy="8" r="3.500" fill="#3f7fc8" />
                    </svg>
                    <span className="ml-[5px] w-[173px] overflow-hidden whitespace-nowrap tracking-[-0.1px]">https://15.128.91.14:8443/ProcessPortal/portal</span>
                    <X size={11} strokeWidth={2} className="ml-[9px] text-white" />
                </div>
                <Plus size={14} className="mb-[9px] ml-[13px] text-[#bdc1c6]" />
                <div className="ml-auto mb-[13px] flex items-center text-white">
                    <Minus size={15} strokeWidth={1.500} />
                    <svg width="11" height="11" viewBox="0 0 11 11" fill="none" stroke="#fff" className="ml-[31px]">
                        <path d="M.5 2.500h8v8h-8zM2.500 2.500v-2h8v8h-2" />
                    </svg>
                    <X size={15} strokeWidth={1.500} className="ml-[33px] mr-[16px]" />
                </div>
            </div>
            <div className="flex h-[36px] shrink-0 items-center bg-[#35363a]">
                <ArrowLeft size={15} className="ml-[15px] text-[#6e7074]" />
                <ArrowRight size={15} className="ml-[17px] text-[#6e7074]" />
                <X size={15} strokeWidth={1.700} className="ml-[17px] text-[#d0d2d5]" />
                <svg width="15" height="16" viewBox="0 0 15 16" fill="none" stroke="#e8eaed" strokeWidth="1.300" className="ml-[16px]">
                    <path d="M7.500 1L1 8h3v7h7V8h3z" />
                </svg>
                <div className="ml-[15px] flex h-[29px] w-[564px] flex-1 items-center rounded-full bg-[#202124]">
                    <svg width="13" height="12" viewBox="0 0 13 12" className="ml-[12px]">
                        <path d="M6.500 0L13 12H0z" fill="#e8eaed" />
                        <path d="M6.500 4v4M6.500 9v1.500" stroke="#202124" />
                    </svg>
                    <span className="ml-[9px] text-[13.500px] text-[#e8eaed]">No es seguro</span>
                    <span className="ml-[8px] h-[18px] w-px bg-[#5f6368]" />
                    <span className="ml-[10px] text-[13.300px] text-[#e8eaed]">
                        15.128.91.14<span className="text-[#9aa0a6]">:8443/ProcessPortal/portal</span>
                    </span>
                    <Star size={14} className="ml-auto mr-[11px] text-[#bdc1c6]" />
                </div>
                <div className="ml-[14px] flex h-[16px] w-[16px] items-center justify-center bg-[#2a70b8] text-[11px] text-white">Ui</div>
                <svg width="13" height="13" viewBox="0 0 13 13" className="ml-[16px]">
                    <path d="M0 0l13 6.500L0 13l2-6.500z" fill="#3b88d0" />
                </svg>
                <span className="ml-[16px] h-[15px] w-px bg-[#5f6368]" />
                <div className="ml-[9px] flex h-[28px] w-[91px] items-center rounded-full border border-[#8ab4f8] bg-[#2b3340] text-[#8ab4f8]">
                    <div className="ml-[2px] flex h-[22px] w-[22px] items-center justify-center rounded-full bg-[#38761d] text-[#e8eaed]">J</div>
                    <span className="ml-[9px] whitespace-nowrap">En pausa</span>
                </div>
                <div className="ml-[4px] mr-[8px] flex h-[28px] w-[28px] flex-col items-center justify-center gap-[2.500px] rounded-full bg-[#5f6063]">
                    <span className="h-[3px] w-[3px] rounded-full bg-white" />
                    <span className="h-[3px] w-[3px] rounded-full bg-white" />
                    <span className="h-[3px] w-[3px] rounded-full bg-white" />
                </div>
            </div>
            <div className="relative flex-1 bg-white">
                <div className="absolute left-[1599px] top-[-4px] h-[131px] w-[320px] rounded-[3px] bg-[#292a2d] text-[#e8eaed] shadow-[0_2px_6px_rgba(0,0,0,0.45)]">
                    <X size={14} strokeWidth={3} className="absolute right-[9px] top-[10px] text-[#d8dadd]" />
                    <div className="ml-[16px] mt-[19px] text-[15px] leading-[20px]">¿Quieres restaurar las páginas?</div>
                    <div className="ml-[16px] mt-[9px] text-[12.500px] leading-[16px]">Chrome no se ha cerrado correctamente.</div>
                    <div className="absolute bottom-[16px] right-[16px] flex h-[32px] w-[84px] items-center justify-center rounded-[3px] bg-[#8ab4f8] text-[13px] text-[#202124]">Restaurar</div>
                </div>
                <div className="absolute bottom-0 left-0 flex h-[22px] w-[638px] items-center rounded-tr-[3px] bg-[#35363a] pl-[5px] text-[#bdc1c6]">Esperando a 15.128.91.14...</div>
            </div>
            <div className="flex h-[30px] shrink-0 items-center bg-[#101010] text-[#e8e8e8]">
                <TaskIcons />
                <span className="ml-auto mr-[7px] whitespace-nowrap">11:58 a. m.</span>
            </div>
        </div>
    );
}

export default function App() {
    return (
        <div className="flex h-[1080px] w-[3286px] overflow-hidden bg-black">
            <LeftMonitor />
            <RightMonitor />
        </div>
    );
}
